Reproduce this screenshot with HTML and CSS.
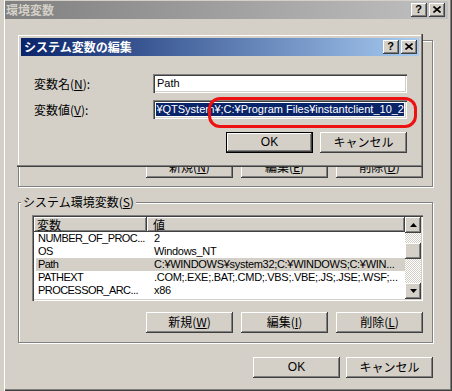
FILE: index.html
```html
<!DOCTYPE html>
<html lang="ja">
<head>
  <meta charset="UTF-8">
  <meta name="viewport" content="width=device-width, initial-scale=1.0">
  <title>環境変数</title>
  <link rel="stylesheet" href="styles.css">
</head>
<body>
  <!-- 背面: 環境変数ウィンドウ -->
  <div class="window">
    <div class="caption caption-inactive">
      <span class="caption-title">環境変数</span>
      <div class="caption-buttons">
        <span class="cap-btn cap-help">?</span>
        <span class="cap-btn cap-close">
          <svg width="8" height="7" viewBox="0 0 8 7"><path d="M0.5 0.5L7.5 6.5M7.5 0.5L0.5 6.5" stroke="#000" stroke-width="1.6"/></svg>
        </span>
      </div>
    </div>

    <div class="client">
      <div class="group group-user">
        <span class="group-label">ユーザー環境変数(<u>U</u>)</span>
        <div class="listview listview-user"></div>
        <div class="btn-row">
          <button class="btn">新規(<u>N</u>)</button>
          <button class="btn">編集(<u>E</u>)</button>
          <button class="btn">削除(<u>D</u>)</button>
        </div>
      </div>

      <div class="group group-system">
        <span class="group-label">システム環境変数(<u>S</u>)</span>
        <div class="listview listview-system">
          <div class="lv-body">
            <div class="lv-header">
              <div class="lv-head col-name">変数</div>
              <div class="lv-head col-value">値</div>
            </div>
            <div class="lv-row">
              <div class="lv-cell col-name">NUMBER_OF_PROC...</div>
              <div class="lv-cell col-value">2</div>
            </div>
            <div class="lv-row">
              <div class="lv-cell col-name">OS</div>
              <div class="lv-cell col-value">Windows_NT</div>
            </div>
            <div class="lv-row is-selected">
              <div class="lv-cell col-name">Path</div>
              <div class="lv-cell col-value">C:¥WINDOWS¥system32;C:¥WINDOWS;C:¥WIN...</div>
            </div>
            <div class="lv-row">
              <div class="lv-cell col-name">PATHEXT</div>
              <div class="lv-cell col-value">.COM;.EXE;.BAT;.CMD;.VBS;.VBE;.JS;.JSE;.WSF;...</div>
            </div>
            <div class="lv-row">
              <div class="lv-cell col-name">PROCESSOR_ARC...</div>
              <div class="lv-cell col-value">x86</div>
            </div>
            <div class="lv-row">
              <div class="lv-cell col-name">PROCESSOR_IDE...</div>
              <div class="lv-cell col-value">x86 Family 6 Model 15 Stepping 6, G...</div>
            </div>
          </div>
          <div class="scrollbar">
            <div class="sb-btn">
              <svg width="7" height="4" viewBox="0 0 7 4"><path d="M3.5 0L7 4H0Z" fill="#000"/></svg>
            </div>
            <div class="sb-track"><div class="sb-thumb"></div></div>
            <div class="sb-btn">
              <svg width="7" height="4" viewBox="0 0 7 4"><path d="M0 0H7L3.5 4Z" fill="#000"/></svg>
            </div>
          </div>
        </div>
        <div class="btn-row">
          <button class="btn">新規(<u>W</u>)</button>
          <button class="btn">編集(<u>I</u>)</button>
          <button class="btn">削除(<u>L</u>)</button>
        </div>
      </div>

      <div class="window-actions">
        <button class="btn btn-latin">OK</button>
        <button class="btn">キャンセル</button>
      </div>
    </div>
  </div>

  <!-- 前面: システム変数の編集 ダイアログ -->
  <div class="dialog">
    <div class="caption caption-active">
      <span class="caption-title">システム変数の編集</span>
      <div class="caption-buttons">
        <span class="cap-btn cap-help">?</span>
        <span class="cap-btn cap-close">
          <svg width="8" height="7" viewBox="0 0 8 7"><path d="M0.5 0.5L7.5 6.5M7.5 0.5L0.5 6.5" stroke="#000" stroke-width="1.6"/></svg>
        </span>
      </div>
    </div>
    <div class="dialog-body">
      <div class="field-grid">
        <label class="field-label">変数名(<u>N</u>):</label>
        <div class="edit"><div class="edit-inner"><span class="edit-text">Path</span></div></div>
        <label class="field-label">変数値(<u>V</u>):</label>
        <div class="edit"><div class="edit-inner edit-scrolled"><span class="edit-text is-selected">¥QTSystem¥;C:¥Program Files¥instantclient_10_2</span></div></div>
      </div>
      <div class="dialog-actions">
        <button class="btn btn-default btn-latin">OK</button>
        <button class="btn">キャンセル</button>
      </div>
    </div>
  </div>

  <!-- 赤い囲み (注釈) -->
  <div class="annotation"></div>
</body>
</html>
```

FILE: styles.css
```css
:root {
  --face: #d4d0c8;
  --shadow: #808080;
  --dark: #404040;
  --hilite: #ffffff;
  --select: #0a246a;
  --jp-font: "Noto Sans CJK JP", "Liberation Sans", sans-serif;
  --latin-font: "Liberation Sans", "Noto Sans CJK JP", sans-serif;
}

* {
  box-sizing: border-box;
}

body {
  margin: 0;
  width: 452px;
  height: 391px;
  overflow: hidden;
  position: relative;
  background: var(--face);
  font-family: var(--jp-font);
  font-size: 12px;
  color: #000;
}

u {
  text-decoration-thickness: 1px;
  text-underline-offset: 1px;
}

/* 背面ウィンドウ */
.window {
  width: 452px;
  height: 391px;
  padding: 1px 4px 0 5px;
  box-shadow:
    inset 4px 0 var(--face),
    inset 5px 0 var(--hilite),
    inset -1px -1px var(--dark),
    inset -2px -2px var(--shadow);
}

/* タイトルバー */
.caption {
  height: 18px;
  display: flex;
  align-items: center;
  justify-content: space-between;
}

.caption-inactive {
  background: linear-gradient(to right, #808080, #c0c0c0);
  color: var(--face);
  padding: 0 3px 0 1px;
}

.caption-active {
  background: linear-gradient(to right, #0a246a, #a6caf0);
  color: #fff;
  padding: 0 2px 0 3px;
}

.caption-title {
  font-weight: bold;
  font-size: 12px;
  line-height: 14px;
}

.caption-buttons {
  display: flex;
  gap: 2px;
}

.cap-btn {
  width: 16px;
  height: 14px;
  display: flex;
  align-items: center;
  justify-content: center;
  background: var(--face);
  box-shadow:
    inset -1px -1px var(--dark),
    inset 1px 1px var(--hilite),
    inset -2px -2px var(--shadow);
}

.cap-help {
  font-family: var(--latin-font);
  font-weight: bold;
  font-size: 11px;
  line-height: 11px;
  color: #000;
  padding: 0 1px 1px 0;
}

.cap-close svg {
  display: block;
  margin: 0 1px 1px 0;
}

/* クライアント領域 */
.client {
  display: flex;
  flex-direction: column;
}

.group {
  position: relative;
  margin-left: 13px;
  width: 415px;
  border: 1px solid var(--shadow);
  box-shadow: inset 1px 1px var(--hilite), 1px 1px var(--hilite);
  padding: 12px 9px 9px 13px;
}

.group-user {
  margin-top: 21px;
  padding-top: 13px;
  padding-bottom: 8px;
}

.group-system {
  margin-top: 15px;
}

.group-label {
  position: absolute;
  top: -8px;
  left: 2px;
  padding: 0 2px;
  line-height: 14px;
  background: var(--face);
}

.listview {
  width: 391px;
  padding: 2px;
  background: #fff;
  box-shadow:
    inset 1px 1px var(--shadow),
    inset 2px 2px var(--dark),
    inset -1px -1px var(--hilite),
    inset -2px -2px var(--face);
}

.listview-user {
  height: 91px;
  margin-bottom: 12px;
}

.listview-system {
  height: 86px;
  display: flex;
  margin-bottom: 11px;
}

.lv-body {
  flex: 1;
  overflow: hidden;
}

.lv-header {
  display: flex;
  height: 15px;
}

.lv-head {
  height: 15px;
  line-height: 15px;
  background: var(--face);
  box-shadow:
    inset -1px -1px var(--dark),
    inset 1px 1px var(--hilite),
    inset -2px -2px var(--shadow);
  white-space: nowrap;
}

.lv-head.col-name {
  width: 113px;
  padding-left: 3px;
}

.lv-head.col-value {
  flex: 1;
  padding-left: 6px;
}

.lv-row {
  display: flex;
  height: 13px;
  margin-left: 2px;
  font-family: var(--latin-font);
  font-size: 11px;
  line-height: 13px;
  white-space: nowrap;
}

.lv-row.is-selected {
  background: var(--face);
}

.lv-cell {
  overflow: hidden;
}

.lv-cell.col-name {
  width: 111px;
  padding-left: 2px;
  letter-spacing: -0.55px;
}

.lv-cell.col-value {
  flex: 1;
  padding-left: 7px;
  letter-spacing: -0.3px;
}

/* スクロールバー */
.scrollbar {
  width: 16px;
  display: flex;
  flex-direction: column;
}

.sb-btn,
.sb-thumb {
  width: 16px;
  height: 16px;
  display: flex;
  align-items: center;
  justify-content: center;
  background: var(--face);
  box-shadow:
    inset -1px -1px var(--dark),
    inset 1px 1px var(--hilite),
    inset -2px -2px var(--shadow);
}

.sb-btn svg {
  display: block;
}

.sb-track {
  flex: 1;
  background: repeating-conic-gradient(#fff 0 25%, var(--face) 0 50%) 0 0 / 2px 2px;
}

.sb-thumb {
  margin-top: 10px;
}

/* ボタン */
.btn-row {
  display: flex;
  justify-content: flex-end;
  gap: 8px;
}

.btn {
  width: 87px;
  height: 21px;
  margin: 0;
  padding: 0 0 1px;
  border: none;
  background: var(--face);
  font-family: var(--jp-font);
  font-size: 12px;
  line-height: 14px;
  color: #000;
  box-shadow:
    inset -1px -1px var(--dark),
    inset 1px 1px var(--hilite),
    inset -2px -2px var(--shadow);
}

.btn-latin {
  font-family: var(--latin-font);
  font-size: 12px;
}

.btn-default {
  border: 1px solid #000;
}

.window-actions {
  display: flex;
  justify-content: flex-end;
  gap: 6px;
  margin-top: 14px;
  padding-right: 15px;
}

/* 前面ダイアログ */
.dialog {
  position: absolute;
  left: 17px;
  top: 34px;
  width: 406px;
  height: 133px;
  padding: 4px;
  background: var(--face);
  box-shadow:
    inset -1px -1px var(--dark),
    inset -2px -2px var(--shadow),
    inset 1px 1px var(--face),
    inset 2px 2px var(--hilite);
}

.dialog-body {
  padding: 18px 12px 0 13px;
}

.field-grid {
  display: grid;
  grid-template-columns: 119px 254px;
  grid-auto-rows: 19px;
  row-gap: 7px;
  align-items: center;
}

.field-label {
  line-height: 14px;
}

.edit {
  height: 19px;
  padding: 2px;
  background: #fff;
  box-shadow:
    inset 1px 1px var(--shadow),
    inset 2px 2px var(--dark),
    inset -1px -1px var(--hilite),
    inset -2px -2px var(--face);
}

.edit-inner {
  height: 100%;
  display: flex;
  align-items: center;
  overflow: hidden;
  padding-left: 2px;
  font-family: var(--latin-font);
  font-size: 11px;
  white-space: nowrap;
}

.edit-scrolled {
  justify-content: flex-end;
  padding: 0 1px 0 0;
}

.edit-text {
  line-height: 13px;
}

.edit-text.is-selected {
  background: var(--select);
  color: #fff;
}

.dialog-actions {
  display: flex;
  justify-content: flex-end;
  gap: 7px;
  margin-top: 13px;
}

/* 注釈の赤枠 */
.annotation {
  position: absolute;
  left: 208px;
  top: 97px;
  width: 209px;
  height: 31px;
  border: 3px solid #ee1111;
  border-radius: 12px;
}
```
